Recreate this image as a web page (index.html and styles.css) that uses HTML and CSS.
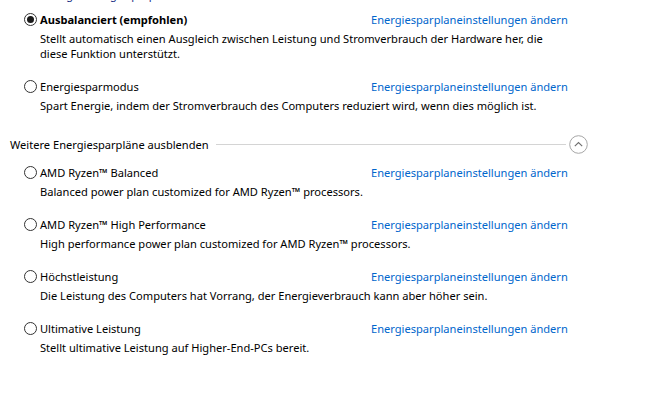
FILE: index.html
```html
<!DOCTYPE html>
<html lang="de">
<head>
<meta charset="utf-8">
<link rel="stylesheet" href="styles.css">
</head>
<body>
<div class="page">
  <div class="cut-heading">Bevorzugte Energiesparpläne</div>
  <div class="plans plans-top">
    <div class="plan">
      <div class="plan-title"><span class="radio checked"></span><span class="name bold">Ausbalanciert (empfohlen)</span></div>
      <a class="link" href="#">Energiesparplaneinstellungen ändern</a>
      <div class="desc">Stellt automatisch einen Ausgleich zwischen Leistung und Stromverbrauch der Hardware her, die<br>diese Funktion unterstützt.</div>
    </div>
    <div class="plan">
      <div class="plan-title"><span class="radio"></span><span class="name">Energiesparmodus</span></div>
      <a class="link" href="#">Energiesparplaneinstellungen ändern</a>
      <div class="desc">Spart Energie, indem der Stromverbrauch des Computers reduziert wird, wenn dies möglich ist.</div>
    </div>
  </div>
  <div class="section-header">
    <span class="section-title">Weitere Energiesparpläne ausblenden</span>
    <span class="rule"></span>
    <span class="toggle"><svg width="19" height="19" viewBox="0 0 19 19"><circle cx="9.5" cy="9.5" r="8.8" fill="none" stroke="#a6a6a6" stroke-width="1"/><path d="M5.8 11.2 L9.5 7.5 L13.2 11.2" fill="none" stroke="#6e6e6e" stroke-width="1.1"/></svg></span>
  </div>
  <div class="plans">
    <div class="plan">
      <div class="plan-title"><span class="radio"></span><span class="name">AMD Ryzen™ Balanced</span></div>
      <a class="link" href="#">Energiesparplaneinstellungen ändern</a>
      <div class="desc">Balanced power plan customized for AMD Ryzen™ processors.</div>
    </div>
    <div class="plan">
      <div class="plan-title"><span class="radio"></span><span class="name">AMD Ryzen™ High Performance</span></div>
      <a class="link" href="#">Energiesparplaneinstellungen ändern</a>
      <div class="desc">High performance power plan customized for AMD Ryzen™ processors.</div>
    </div>
    <div class="plan">
      <div class="plan-title"><span class="radio"></span><span class="name">Höchstleistung</span></div>
      <a class="link" href="#">Energiesparplaneinstellungen ändern</a>
      <div class="desc">Die Leistung des Computers hat Vorrang, der Energieverbrauch kann aber höher sein.</div>
    </div>
    <div class="plan">
      <div class="plan-title"><span class="radio"></span><span class="name">Ultimative Leistung</span></div>
      <a class="link" href="#">Energiesparplaneinstellungen ändern</a>
      <div class="desc">Stellt ultimative Leistung auf Higher-End-PCs bereit.</div>
    </div>
  </div>
</div>
</body>
</html>
```
FILE: styles.css
```css
html, body {
  margin: 0;
  padding: 0;
  background: #ffffff;
}
body {
  font-family: "Noto Sans", "Open Sans", sans-serif;
  font-size: 11.1px;
  line-height: 15px;
  color: #000000;
  overflow: hidden;
}
.page {
  width: 655px;
  height: 393px;
  overflow: hidden;
}
.cut-heading {
  margin-top: -13px;
  padding-left: 24px;
  height: 15px;
  color: #1e3287;
}
.plans {
  padding-left: 24px;
  display: flex;
  flex-direction: column;
  gap: 18px;
}
.plans-top {
  margin-top: 10px;
}
.plan {
  display: grid;
  grid-template-columns: 347px auto;
  row-gap: 4px;
}
.plan-title {
  display: flex;
  align-items: center;
  gap: 3px;
}
.name.bold {
  font-weight: 700;
}
.radio {
  width: 13px;
  height: 13px;
  box-sizing: border-box;
  border: 1px solid #333333;
  border-radius: 50%;
  display: flex;
  align-items: center;
  justify-content: center;
  flex: none;
}
.radio.checked::after {
  content: "";
  width: 7px;
  height: 7px;
  border-radius: 50%;
  background: #1a1a1a;
}
.link {
  color: #0066cc;
  text-decoration: none;
}
.desc {
  grid-column: 1 / 3;
  padding-left: 16px;
}
.section-header {
  margin-top: 22px;
  margin-bottom: 11px;
  padding-left: 10px;
  width: 578px;
  height: 19px;
  display: flex;
  align-items: center;
  gap: 7px;
}
.rule {
  flex: 1;
  height: 1px;
  background: #d4d4d4;
}
.toggle {
  width: 19px;
  height: 19px;
  display: block;
  margin-left: -4px;
}
.toggle svg {
  display: block;
}
```
